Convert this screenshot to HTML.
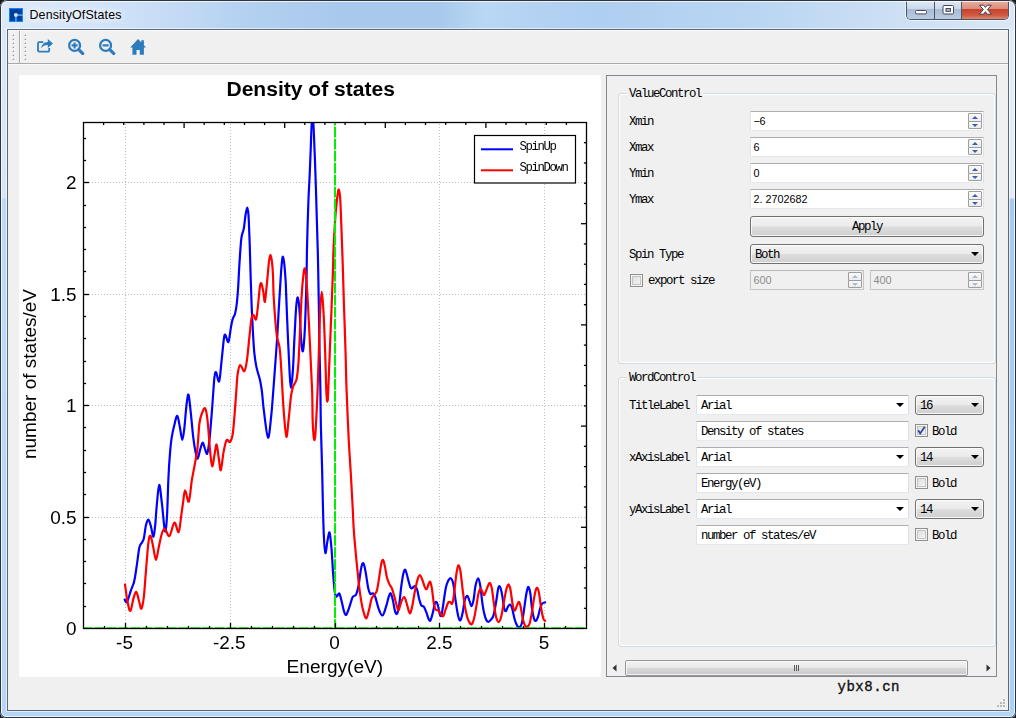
<!DOCTYPE html>
<html><head><meta charset="utf-8"><title>DensityOfStates</title>
<style>
html,body{margin:0;padding:0}
body{width:1016px;height:718px;overflow:hidden;background:#1a1a1a;position:relative;font-family:"Liberation Mono",monospace;font-size:12px;color:#000}
*{box-sizing:border-box}
.abs{position:absolute}
#frame{position:absolute;left:0;top:0;width:1016px;height:718px;border-radius:7px 7px 6px 6px;
 background:linear-gradient(90deg,#dce9f8 0,#d7e7f9 60px,#c9def6 150px,#b3d0f0 250px,#a9c9ec 340px,#a9c9ec 440px,#b9d8f5 485px,#b4d3f3 530px,#afcff1 600px,#b9d5f2 750px,#cde0f4 900px,#d9e7f6 1016px);overflow:hidden}
#frame:before{content:"";position:absolute;left:1px;top:1px;right:1px;bottom:1px;border:1px solid rgba(255,255,255,.75);border-radius:6px 6px 5px 5px;z-index:20;pointer-events:none}
#frame:after{content:"";position:absolute;left:0;top:0;right:0;bottom:0;border:1px solid #2c3440;border-radius:7px 7px 6px 6px;z-index:21;pointer-events:none}
#sideL,#sideR,#sideB{position:absolute;background:#b9d4f1}
#sideL{left:1px;top:30px;width:6px;bottom:1px;background:linear-gradient(#d9e7f7 0,#d6e5f6 168px,#bcdbf9 169px,#b6d5f5 100%)}
#sideR{right:1px;top:30px;width:6px;bottom:1px;background:linear-gradient(#e2ecf8 0,#e2ecf8 168px,#a9cbee 169px,#add0f2 100%)}
#sideB{left:1px;right:1px;bottom:1px;height:6px;background:#b5d5f7}
#client{position:absolute;left:7px;top:29px;width:1002px;height:682px;border:1px solid #5b6678;background:#f0f0f0;box-shadow:0 0 0 1px rgba(255,255,255,.6)}
#title{position:absolute;left:29.5px;top:7px;font-family:"Liberation Sans",sans-serif;font-size:12.4px;letter-spacing:.17px;line-height:16px;color:#000;text-shadow:0 0 6px #fff,0 0 10px #fff,0 0 14px #fff;white-space:nowrap}
#appicon{position:absolute;left:9px;top:8px;width:14px;height:14px}
#btns{position:absolute;left:906px;top:0;width:103px;height:20px;border:1px solid #4a5566;border-top:none;border-radius:0 0 5px 5px;overflow:hidden;box-shadow:0 0 0 1px rgba(255,255,255,.55)}
#btns div{position:absolute;top:0;height:19px}
#bmin{left:0;width:28px;background:linear-gradient(#e3ecf6 0,#cbd9ea 45%,#a9bdd6 50%,#b9cbe2 100%);border-right:1px solid #4a5566}
#bmax{left:28px;width:27px;background:linear-gradient(#e3ecf6 0,#cbd9ea 45%,#a9bdd6 50%,#b9cbe2 100%);border-right:1px solid #4a5566}
#bclose{left:55px;width:47px;background:linear-gradient(#eab4a6 0,#dc8e7d 45%,#c8432c 50%,#d0583f 80%,#dd8a6e 100%)}
#toolbar{position:absolute;left:8px;top:30px;width:1000px;height:34px;background:#f0f0f0;border-bottom:1px solid #a9a9a9;border-top:1px solid #fcfcfc;box-shadow:0 1px 0 #f8f8f8}
.handle{position:absolute;top:4px;width:3px;height:26px;background:repeating-linear-gradient(#b4b4b4 0,#b4b4b4 1.5px,#f8f8f8 1.5px,#f8f8f8 3px,#f0f0f0 3px,#f0f0f0 4px)}
#tsep{position:absolute;left:11px;top:1px;width:1px;height:32px;background:#b0b0b0}
.ticon{position:absolute;top:8px;width:18px;height:18px}
.chart{position:absolute;left:19px;top:75px;will-change:transform}
.grid{stroke:#bebebe;stroke-width:1;stroke-dasharray:1 2;shape-rendering:crispEdges}
#scroll{position:absolute;left:606px;top:75px;width:391px;height:602px;border:1px solid #828790;background:#f0f0f0}
.gb{position:absolute;border:1px solid #d0dbe3;border-radius:3px;box-shadow:inset 0 0 0 1px #fdfdfd}
.gbt{position:absolute;background:#f0f0f0;padding:0 2px;line-height:12px;white-space:nowrap}
.t{position:absolute;white-space:nowrap;line-height:14px;letter-spacing:-1.44px;font-size:12.4px}
.spin,.le,.ecombo{position:absolute;height:20px;border:1px solid;border-color:#abadb3 #dbdfe6 #e3e9ef #e2e3ea;background:#fff;border-radius:1px}
.spin.dis{background:#f0f0f0;border-color:#b8b8b8 #c4c4c4 #c4c4c4 #c4c4c4}
.spin.dis .v{color:#8a8a8a}
.v{position:absolute;left:2.5px;top:2px;line-height:14px;font-family:"Liberation Sans",sans-serif;font-size:10.8px;white-space:nowrap}
.v b{display:inline-block;width:6px;text-align:center;font-weight:normal}
.sb{position:absolute;right:1px;top:1px;width:14px;height:16px}
.sb i{position:absolute;left:0;width:14px;height:8.5px;border:1px solid #9d9d9d;background:linear-gradient(#fafafa,#ececec);border-radius:1px}
.sb i:first-child{top:0}.sb i:last-child{top:7.5px}
.sb i:before{content:"";position:absolute;left:3px;top:1.5px;border:3px solid transparent}
.sb i:first-child:before{border-bottom:3.2px solid #3d5fa8;border-top:none}
.sb i:last-child:before{border-top:3.2px solid #3d5fa8;border-bottom:none;top:2px}
.dis .sb i:before{opacity:.4}
.btn{position:absolute;border:1px solid #707070;border-radius:3px;background:linear-gradient(#f2f2f2 0,#ebebeb 48%,#dddddd 52%,#cfcfcf 100%);box-shadow:inset 0 0 0 1px rgba(255,255,255,.8);text-align:center}
.combo{position:absolute;height:20px;border:1px solid #707070;border-radius:3px;background:linear-gradient(#f2f2f2 0,#ebebeb 48%,#dddddd 52%,#cfcfcf 100%);box-shadow:inset 0 0 0 1px rgba(255,255,255,.8)}
.arr{position:absolute;right:4.5px;top:7px;border-left:4px solid transparent;border-right:4px solid transparent;border-top:4.5px solid #000}
.cb{position:absolute;width:13px;height:13px;border:1px solid #8e8f8f;background:#f4f4f4;box-shadow:inset 0 0 0 1px #f4f4f4, inset 0 0 0 2px #c4c4c4;background:linear-gradient(135deg,#d9d9d9,#fafafa)}
#hsb{position:absolute;left:607px;top:660px;width:389px;height:16px;background:#f0f0f0}
#thumb{position:absolute;left:18px;top:0px;width:343px;height:15.5px;border:1px solid #979797;border-radius:2px;background:linear-gradient(#f3f3f3 0,#e9e9e9 45%,#d7d7d7 55%,#c9c9c9 100%);box-shadow:inset 0 0 0 1px rgba(255,255,255,.7)}
</style></head><body>
<div id="frame">
 <div id="sideL"></div><div id="sideR"></div><div id="sideB"></div>
 <svg id="appicon" viewBox="0 0 14 14"><rect width="14" height="14" fill="#0b8bf2"/><rect x="1" y="1" width="12" height="12" fill="#003f9e"/><rect x="6" y="8.5" width="1.8" height="5.5" fill="#3c9cf8"/><rect x="8.4" y="6.4" width="5.6" height="1.4" fill="#5aaefc"/><circle cx="6.9" cy="7.1" r="2" fill="#cfe6ff"/></svg>
 <div id="title">DensityOfStates</div>
 <div id="btns"><div id="bmin"></div><div id="bmax"></div><div id="bclose"></div>
  <svg class="abs" style="left:0;top:0" width="103" height="20" viewBox="0 0 103 20">
   <rect x="8.5" y="10.5" width="11" height="3.4" rx="1" fill="#fff" stroke="#45475a" stroke-width="1"/>
   <rect x="36" y="5.5" width="10.5" height="8.5" rx="1" fill="#fff" stroke="#45475a" stroke-width="1"/>
   <rect x="39" y="8.5" width="4.5" height="2.8" fill="#a9bdd6" stroke="#45475a" stroke-width="1"/>
   <path d="M72.6 5.2h4l1.8 2.2 1.8-2.2h4l-3.7 4.4 3.9 4.6h-4.1l-1.9-2.5-1.9 2.5h-4.1l3.9-4.6z" fill="#fff" stroke="#3d3f52" stroke-width="1" stroke-linejoin="round"/>
  </svg>
 </div>
 <div id="client"></div>
 <div id="toolbar"></div>
 <svg class="abs" style="left:0;top:0" width="40" height="66" viewBox="0 0 40 66" shape-rendering="crispEdges"><rect x="12" y="34" width="1" height="1" fill="#fff"/><rect x="13" y="34" width="1" height="1" fill="#c9c9c9"/><rect x="12" y="35" width="1" height="1" fill="#c9c9c9"/><rect x="13" y="35" width="1" height="1" fill="#a3a3a3"/><rect x="12" y="38" width="1" height="1" fill="#fff"/><rect x="13" y="38" width="1" height="1" fill="#c9c9c9"/><rect x="12" y="39" width="1" height="1" fill="#c9c9c9"/><rect x="13" y="39" width="1" height="1" fill="#a3a3a3"/><rect x="12" y="42" width="1" height="1" fill="#fff"/><rect x="13" y="42" width="1" height="1" fill="#c9c9c9"/><rect x="12" y="43" width="1" height="1" fill="#c9c9c9"/><rect x="13" y="43" width="1" height="1" fill="#a3a3a3"/><rect x="12" y="46" width="1" height="1" fill="#fff"/><rect x="13" y="46" width="1" height="1" fill="#c9c9c9"/><rect x="12" y="47" width="1" height="1" fill="#c9c9c9"/><rect x="13" y="47" width="1" height="1" fill="#a3a3a3"/><rect x="12" y="50" width="1" height="1" fill="#fff"/><rect x="13" y="50" width="1" height="1" fill="#c9c9c9"/><rect x="12" y="51" width="1" height="1" fill="#c9c9c9"/><rect x="13" y="51" width="1" height="1" fill="#a3a3a3"/><rect x="12" y="54" width="1" height="1" fill="#fff"/><rect x="13" y="54" width="1" height="1" fill="#c9c9c9"/><rect x="12" y="55" width="1" height="1" fill="#c9c9c9"/><rect x="13" y="55" width="1" height="1" fill="#a3a3a3"/><rect x="12" y="58" width="1" height="1" fill="#fff"/><rect x="13" y="58" width="1" height="1" fill="#c9c9c9"/><rect x="12" y="59" width="1" height="1" fill="#c9c9c9"/><rect x="13" y="59" width="1" height="1" fill="#a3a3a3"/><rect x="24" y="34" width="1" height="1" fill="#fff"/><rect x="25" y="34" width="1" height="1" fill="#c9c9c9"/><rect x="24" y="35" width="1" height="1" fill="#c9c9c9"/><rect x="25" y="35" width="1" height="1" fill="#a3a3a3"/><rect x="24" y="38" width="1" height="1" fill="#fff"/><rect x="25" y="38" width="1" height="1" fill="#c9c9c9"/><rect x="24" y="39" width="1" height="1" fill="#c9c9c9"/><rect x="25" y="39" width="1" height="1" fill="#a3a3a3"/><rect x="24" y="42" width="1" height="1" fill="#fff"/><rect x="25" y="42" width="1" height="1" fill="#c9c9c9"/><rect x="24" y="43" width="1" height="1" fill="#c9c9c9"/><rect x="25" y="43" width="1" height="1" fill="#a3a3a3"/><rect x="24" y="46" width="1" height="1" fill="#fff"/><rect x="25" y="46" width="1" height="1" fill="#c9c9c9"/><rect x="24" y="47" width="1" height="1" fill="#c9c9c9"/><rect x="25" y="47" width="1" height="1" fill="#a3a3a3"/><rect x="24" y="50" width="1" height="1" fill="#fff"/><rect x="25" y="50" width="1" height="1" fill="#c9c9c9"/><rect x="24" y="51" width="1" height="1" fill="#c9c9c9"/><rect x="25" y="51" width="1" height="1" fill="#a3a3a3"/><rect x="24" y="54" width="1" height="1" fill="#fff"/><rect x="25" y="54" width="1" height="1" fill="#c9c9c9"/><rect x="24" y="55" width="1" height="1" fill="#c9c9c9"/><rect x="25" y="55" width="1" height="1" fill="#a3a3a3"/><rect x="24" y="58" width="1" height="1" fill="#fff"/><rect x="25" y="58" width="1" height="1" fill="#c9c9c9"/><rect x="24" y="59" width="1" height="1" fill="#c9c9c9"/><rect x="25" y="59" width="1" height="1" fill="#a3a3a3"/><rect x="19" y="31" width="1" height="32" fill="#a6a6a6"/><rect x="20" y="31" width="1" height="32" fill="#fdfdfd"/></svg>
 <svg class="ticon" style="left:36px;top:37px" viewBox="0 0 18 18"><g fill="none" stroke="#2c7cbd" stroke-width="1.8" stroke-linejoin="round"><path d="M7.4 5.2H3.2a1.2 1.2 0 0 0-1.2 1.2v7a1.2 1.2 0 0 0 1.2 1.2h8.8a1.2 1.2 0 0 0 1.2-1.2V11"/></g><path d="M5.2 11.6c.3-4.3 3-6.5 6.6-6.7V2.1L17 6.6 11.8 11V8.1c-2.7-.1-4.8.7-6.6 3.5z" fill="#2c7cbd"/></svg>
 <svg class="ticon" style="left:67px;top:37px" viewBox="0 0 18 18"><circle cx="7.6" cy="8.4" r="5.45" fill="none" stroke="#2c7cbd" stroke-width="2.25"/><path d="M11.8 12.6l4 4" stroke="#2c7cbd" stroke-width="3" stroke-linecap="round"/><path d="M4.6 8.4h6M7.6 5.4v6" stroke="#2c7cbd" stroke-width="2.1"/></svg>
 <svg class="ticon" style="left:98px;top:37px" viewBox="0 0 18 18"><circle cx="7.6" cy="8.4" r="5.45" fill="none" stroke="#2c7cbd" stroke-width="2.25"/><path d="M11.8 12.6l4 4" stroke="#2c7cbd" stroke-width="3" stroke-linecap="round"/><path d="M4.6 8.4h6" stroke="#2c7cbd" stroke-width="2.1"/></svg>
 <svg class="ticon" style="left:129px;top:37px" viewBox="0 0 18 18"><path d="M9.1 2L1.2 10.4h2.2v7.4h4.1v-4.9h3.3v4.9h4.1v-7.4h2.1L14.9 8.2V3.3h-2.6v2.1z" fill="#2c7cbd"/></svg>

<svg class="chart" width="582" height="602" viewBox="19 75 582 602">
<rect x="19" y="75" width="582" height="602" fill="#fff"/>
<line x1="125.5" y1="629.0" x2="125.5" y2="122.0" class="grid"/>
<line x1="230.5" y1="629.0" x2="230.5" y2="122.0" class="grid"/>
<line x1="335.5" y1="629.0" x2="335.5" y2="122.0" class="grid"/>
<line x1="439.5" y1="629.0" x2="439.5" y2="122.0" class="grid"/>
<line x1="544.5" y1="629.0" x2="544.5" y2="122.0" class="grid"/>
<line x1="83.0" y1="517.5" x2="587.0" y2="517.5" class="grid"/>
<line x1="83.0" y1="405.5" x2="587.0" y2="405.5" class="grid"/>
<line x1="83.0" y1="294.5" x2="587.0" y2="294.5" class="grid"/>
<line x1="83.0" y1="182.5" x2="587.0" y2="182.5" class="grid"/>
<defs><clipPath id="cp"><rect x="83.5" y="122.5" width="503.0" height="507.0"/></clipPath></defs>
<g clip-path="url(#cp)" fill="none" stroke-linejoin="round" stroke-linecap="round">
<path d="M124.7 599.6C125.1 600.0 126.0 603.5 127.0 602.0C128.0 600.5 129.7 593.9 130.9 590.4C132.1 586.9 133.2 585.4 134.2 581.2C135.2 577.0 136.0 570.9 136.8 565.3C137.7 559.7 138.5 551.5 139.3 547.7C140.1 543.9 141.1 544.2 141.8 542.7C142.6 541.2 143.1 541.4 143.8 538.5C144.5 535.6 145.2 528.2 146.0 525.1C146.8 522.0 147.7 519.4 148.5 519.7C149.3 520.0 150.2 523.9 151.0 526.8C151.8 529.6 152.8 537.1 153.5 536.8C154.2 536.5 154.6 530.4 155.2 525.1C155.8 519.8 156.1 511.7 156.8 505.0C157.5 498.3 158.3 485.2 159.2 484.9C160.0 484.6 160.9 495.6 161.9 503.3C162.9 511.0 164.1 528.5 164.9 531.0C165.7 533.5 166.3 526.7 166.9 518.0C167.5 509.3 167.9 489.7 168.4 478.7C168.9 467.7 169.5 458.9 170.1 451.9C170.7 444.9 171.1 441.3 171.8 436.9C172.5 432.4 173.4 428.7 174.3 425.2C175.2 421.7 176.3 415.4 177.3 416.0C178.3 416.6 179.3 424.5 180.1 428.5C180.9 432.5 181.6 439.9 182.3 439.9C183.0 439.9 183.6 434.3 184.3 428.5C185.0 422.7 185.8 410.7 186.5 405.1C187.2 399.5 187.8 393.6 188.5 394.7C189.2 395.8 189.9 404.8 190.7 411.8C191.5 418.8 192.4 430.2 193.2 436.9C194.0 443.6 194.8 448.3 195.5 451.9C196.2 455.5 196.9 459.0 197.7 458.6C198.5 458.2 199.4 452.0 200.2 449.4C201.0 446.8 201.9 442.8 202.7 442.7C203.5 442.6 204.2 446.8 204.9 448.6C205.7 450.4 206.4 455.0 207.2 453.6C207.9 452.2 208.7 446.6 209.4 440.2C210.1 433.8 210.9 423.6 211.6 415.1C212.3 406.6 213.0 395.6 213.5 389.0C214.0 382.4 214.2 378.2 214.7 375.4C215.1 372.6 215.4 371.4 216.2 372.4C216.9 373.4 218.3 383.6 219.2 381.3C220.1 379.0 221.0 365.8 221.8 358.7C222.6 351.6 223.3 342.6 223.9 338.6C224.5 334.6 224.7 334.3 225.4 334.9C226.2 335.5 227.5 343.3 228.4 342.0C229.3 340.7 230.3 330.7 231.0 326.9C231.7 323.1 231.9 321.6 232.6 319.4C233.3 317.2 234.4 316.1 235.1 313.5C235.8 310.9 236.3 308.0 236.8 303.5C237.3 299.0 237.8 292.9 238.2 286.7C238.6 280.4 238.8 274.0 239.3 266.0C239.8 258.0 240.6 244.8 241.3 238.6C242.1 232.4 243.1 232.5 243.8 228.6C244.5 224.7 244.9 218.7 245.5 215.2C246.1 211.7 246.7 207.7 247.2 207.7C247.7 207.7 248.1 209.2 248.5 215.2C248.9 221.2 249.3 233.7 249.7 243.7C250.0 253.7 250.4 267.8 250.6 275.0C250.8 282.2 250.8 280.6 251.0 286.7C251.2 292.8 251.5 303.4 251.9 311.8C252.3 320.2 252.8 329.9 253.2 336.9C253.6 343.9 253.9 348.9 254.4 353.7C254.9 358.4 255.5 362.1 256.1 365.4C256.7 368.7 257.5 371.1 258.2 373.7C258.9 376.3 259.6 377.9 260.2 381.0C260.8 384.1 261.4 387.1 262.0 392.0C262.6 396.9 262.8 402.5 263.8 410.1C264.8 417.7 266.8 436.9 268.0 437.7C269.2 438.5 270.4 423.4 271.3 415.1C272.2 406.8 272.8 396.6 273.5 388.0C274.2 379.4 274.7 371.6 275.3 363.7C275.9 355.8 276.4 348.9 277.0 340.3C277.6 331.7 278.1 321.2 278.6 311.8C279.2 302.4 279.8 291.9 280.3 284.0C280.8 276.1 281.2 269.1 281.7 264.5C282.1 259.9 282.5 256.4 283.0 256.7C283.5 256.9 284.1 261.8 284.5 266.0C284.9 270.2 285.4 277.1 285.7 282.0C286.0 286.9 285.8 286.0 286.2 295.1C286.6 304.2 287.3 324.3 287.9 336.9C288.4 349.4 289.0 361.9 289.5 370.4C290.0 378.9 290.3 388.0 290.9 388.0C291.5 388.0 292.3 378.9 292.9 370.4C293.5 361.9 293.9 347.5 294.5 336.9C295.1 326.3 295.6 313.4 296.2 306.8C296.8 300.2 297.3 296.8 297.9 297.6C298.5 298.4 299.1 304.7 299.6 311.8C300.2 318.9 300.6 333.7 301.2 340.3C301.8 346.9 302.3 352.3 302.9 351.2C303.5 350.1 304.1 341.6 304.6 333.6C305.1 325.7 305.5 313.3 305.8 303.5C306.1 293.7 306.4 285.0 306.6 275.0C306.8 265.0 306.8 255.9 307.1 243.7C307.4 231.5 308.0 213.0 308.4 201.8C308.8 190.6 309.2 185.0 309.6 176.7C310.0 168.4 310.1 163.1 310.6 152.0C311.1 140.9 311.8 110.0 312.5 110.0C313.2 110.0 314.1 139.5 314.6 152.0C315.2 164.5 315.4 174.0 315.8 185.1C316.2 196.2 316.4 206.1 316.8 218.6C317.2 231.1 317.7 246.2 318.0 260.4C318.3 274.5 318.5 287.9 318.8 303.5C319.1 319.1 319.3 339.3 319.6 353.7C319.9 368.1 320.2 377.8 320.4 390.0C320.6 402.2 320.6 413.7 320.9 426.8C321.2 439.9 321.8 455.7 322.1 468.7C322.4 481.7 322.6 493.6 322.9 505.0C323.2 516.4 323.5 528.8 323.9 536.8C324.3 544.8 324.8 552.7 325.4 553.2C326.0 553.8 326.9 543.5 327.6 540.1C328.3 536.7 329.0 531.2 329.6 532.6C330.2 534.0 330.9 541.7 331.5 548.5C332.1 555.3 332.6 566.4 333.1 573.6C333.7 580.9 334.2 588.1 334.8 592.0C335.4 595.9 335.8 596.4 336.5 596.7C337.2 597.0 338.4 592.7 339.3 593.6C340.2 594.5 341.0 598.9 341.8 602.0C342.6 605.1 343.5 610.0 344.3 612.1C345.1 614.2 345.5 615.5 346.4 614.6C347.2 613.8 348.3 609.9 349.4 607.0C350.4 604.1 351.6 599.1 352.7 597.0C353.8 594.9 355.1 596.5 356.1 594.5C357.1 592.5 357.8 589.6 358.6 585.3C359.4 581.0 360.3 572.2 361.1 568.5C361.9 564.8 362.6 562.6 363.3 563.2C364.1 563.8 364.8 567.7 365.6 571.9C366.4 576.1 367.5 584.9 368.3 588.6C369.1 592.3 369.6 593.2 370.3 594.0C371.1 594.8 372.0 592.8 372.8 593.3C373.6 593.8 374.3 594.4 375.3 597.0C376.3 599.6 377.4 605.6 378.6 608.7C379.8 611.8 381.2 615.8 382.5 615.4C383.8 615.0 385.2 609.3 386.2 606.2C387.2 603.1 387.9 599.1 388.7 597.0C389.4 594.9 390.0 592.8 390.7 593.3C391.4 593.8 392.2 597.3 392.9 600.3C393.6 603.3 394.3 609.0 395.0 611.2C395.7 613.4 396.4 614.7 397.1 613.7C397.8 612.7 398.4 609.9 399.1 605.4C399.8 600.9 400.5 592.3 401.2 587.0C401.9 581.7 402.7 576.5 403.4 573.6C404.1 570.8 404.6 569.1 405.4 569.9C406.1 570.7 407.1 575.7 407.9 578.6C408.7 581.5 409.7 585.7 410.4 587.3C411.1 588.9 411.4 588.5 412.1 588.3C412.8 588.1 413.8 586.0 414.6 586.1C415.4 586.2 416.1 586.5 416.8 588.6C417.6 590.7 418.4 595.9 419.1 598.7C419.9 601.5 420.5 604.1 421.3 605.4C422.1 606.7 423.0 605.6 423.8 606.7C424.6 607.8 425.5 610.1 426.3 612.1C427.1 614.1 427.8 617.3 428.5 618.7C429.2 620.1 429.8 621.5 430.5 620.4C431.2 619.3 432.3 614.9 433.0 612.1C433.7 609.3 434.1 605.4 434.7 603.7C435.3 602.0 435.8 601.6 436.4 602.0C437.0 602.4 437.6 604.2 438.1 606.2C438.7 608.2 439.1 612.2 439.7 613.7C440.2 615.2 440.8 617.1 441.4 615.4C442.0 613.7 442.7 608.1 443.4 603.5C444.1 598.9 445.0 591.8 445.8 588.0C446.6 584.2 447.5 582.2 448.3 580.6C449.1 579.0 450.0 577.8 450.9 578.4C451.8 579.0 452.6 580.6 453.4 584.5C454.2 588.4 455.0 596.7 455.8 602.0C456.6 607.3 457.5 613.5 458.3 616.5C459.1 619.5 459.7 620.9 460.4 620.3C461.1 619.7 461.9 616.3 462.6 613.0C463.3 609.7 464.0 603.1 464.8 600.3C465.6 597.4 466.6 595.9 467.3 595.9C468.1 595.9 468.6 598.6 469.3 600.3C470.0 602.0 470.8 606.2 471.5 606.2C472.2 606.2 472.8 603.8 473.5 600.3C474.2 596.8 474.8 589.0 475.6 585.3C476.4 581.6 477.4 578.3 478.2 578.3C479.0 578.3 479.4 580.8 480.2 585.3C480.9 589.8 481.9 600.1 482.7 605.4C483.5 610.7 484.3 614.4 485.2 617.1C486.1 619.8 487.0 621.4 488.0 621.8C489.0 622.2 490.1 620.7 491.0 619.6C491.9 618.5 492.6 618.3 493.5 615.4C494.4 612.5 495.3 606.5 496.1 602.0C496.9 597.5 497.6 591.2 498.2 588.6C498.8 586.0 499.3 585.8 499.9 586.6C500.5 587.4 501.2 590.1 501.9 593.6C502.6 597.1 503.5 605.0 504.1 607.9C504.8 610.8 505.2 611.4 505.8 611.2C506.4 611.1 507.1 608.1 507.8 607.0C508.5 605.9 509.2 604.4 509.9 604.5C510.6 604.6 511.2 605.5 512.0 607.9C512.8 610.3 513.7 615.8 514.5 618.7C515.3 621.6 516.2 624.0 517.0 625.4C517.8 626.8 518.4 627.7 519.2 627.4C520.0 627.1 521.0 626.3 521.7 623.8C522.5 621.2 523.0 616.6 523.7 612.1C524.4 607.6 525.2 600.9 525.8 597.0C526.4 593.1 527.0 590.2 527.5 588.6C528.0 587.0 528.2 586.5 528.7 587.3C529.2 588.1 529.9 590.0 530.4 593.6C530.9 597.2 531.4 604.5 532.0 608.7C532.6 612.9 533.4 616.7 534.0 618.7C534.6 620.7 535.1 621.2 535.7 620.9C536.4 620.6 537.2 619.1 537.9 617.1C538.6 615.1 539.4 610.9 540.1 608.7C540.8 606.5 541.3 604.8 542.1 603.7C542.9 602.7 544.6 602.6 545.1 602.4" stroke="#0000ff" stroke-width="2.2"/>
<path d="M125.0 584.5C125.4 587.4 126.7 597.7 127.6 602.1C128.5 606.5 129.4 611.5 130.4 610.9C131.4 610.3 132.4 601.9 133.4 598.7C134.4 595.6 135.3 591.4 136.3 592.0C137.3 592.6 138.5 599.3 139.3 602.1C140.2 604.9 140.7 609.6 141.4 608.8C142.2 608.0 143.0 603.5 143.8 597.1C144.6 590.7 145.2 579.5 146.0 570.3C146.8 561.1 147.7 547.5 148.5 541.8C149.3 536.1 149.8 535.1 150.6 536.0C151.4 536.9 152.3 542.9 153.2 546.9C154.1 550.9 155.1 559.9 156.0 559.9C156.9 559.9 157.8 551.3 158.8 546.9C159.8 542.5 160.9 536.5 161.9 533.5C162.9 530.5 163.7 528.4 164.9 528.8C166.2 529.2 167.8 537.0 169.4 536.0C171.0 535.0 172.9 523.2 174.4 522.6C175.9 522.0 177.5 533.1 178.6 532.1C179.7 531.1 180.4 521.6 181.1 516.7C181.8 511.9 182.3 507.4 183.0 503.0C183.7 498.6 184.1 490.6 185.1 490.4C186.1 490.2 187.7 503.3 188.8 501.6C189.9 499.9 190.9 486.2 191.8 480.4C192.7 474.6 193.4 472.3 194.3 467.0C195.2 461.7 196.6 455.9 197.4 448.6C198.2 441.4 198.7 429.4 199.4 423.5C200.2 417.6 200.9 415.9 201.9 413.4C202.9 410.9 204.2 407.0 205.2 408.4C206.2 409.8 206.9 414.6 207.7 421.8C208.5 429.1 209.4 444.5 210.2 451.9C210.9 459.3 211.5 465.6 212.2 466.2C212.9 466.8 213.7 458.9 214.4 455.3C215.1 451.7 215.9 444.1 216.6 444.4C217.3 444.7 217.9 452.7 218.6 457.0C219.3 461.3 220.0 471.2 220.8 470.3C221.6 469.4 222.6 456.9 223.6 451.9C224.6 446.9 225.5 441.9 226.6 440.2C227.7 438.5 229.0 443.0 230.0 441.9C231.0 440.8 231.9 439.6 232.8 433.5C233.7 427.4 234.7 412.7 235.3 405.1C235.9 397.5 236.1 393.2 236.5 388.0C236.9 382.8 237.1 377.5 237.7 373.7C238.3 369.9 239.1 365.4 240.2 365.0C241.3 364.6 243.2 372.0 244.3 371.2C245.4 370.4 246.1 366.1 246.9 360.4C247.8 354.7 248.6 343.9 249.4 336.9C250.2 329.9 250.8 322.2 251.5 318.5C252.2 314.8 252.7 314.7 253.5 314.8C254.3 314.9 255.3 321.3 256.1 319.4C256.9 317.5 257.6 308.9 258.2 303.5C258.8 298.1 259.4 290.1 259.9 286.7C260.4 283.3 260.8 282.5 261.4 283.4C262.0 284.2 262.7 288.7 263.3 291.8C263.9 294.9 264.3 302.7 264.9 301.8C265.4 300.9 266.1 291.3 266.6 286.7C267.1 282.1 267.4 278.1 267.8 274.0C268.2 269.9 268.5 265.3 268.9 262.1C269.3 258.9 269.9 254.9 270.4 254.9C270.9 254.9 271.6 258.8 272.0 262.1C272.4 265.5 272.7 269.5 273.0 275.0C273.3 280.5 273.2 287.6 273.6 295.1C274.0 302.6 274.7 313.2 275.3 320.2C275.9 327.2 276.3 332.4 277.0 336.9C277.7 341.4 278.9 342.8 279.5 347.0C280.1 351.2 280.3 355.2 280.8 362.0C281.3 368.8 281.8 379.4 282.3 388.0C282.8 396.6 283.2 405.2 283.9 413.4C284.6 421.5 285.6 436.3 286.4 436.9C287.2 437.5 288.1 423.6 288.9 416.8C289.7 410.0 290.3 401.0 291.0 396.0C291.7 391.0 292.4 389.0 293.0 387.0C293.6 385.0 293.9 385.2 294.5 383.8C295.1 382.4 296.1 382.2 296.7 378.8C297.3 375.4 297.8 372.1 298.4 363.7C299.0 355.3 299.6 340.0 300.1 328.6C300.7 317.2 301.1 304.0 301.7 295.1C302.2 286.2 302.9 279.4 303.4 275.0C303.9 270.6 304.4 267.8 304.9 268.4C305.4 269.0 305.8 272.5 306.3 278.4C306.8 284.2 307.2 290.9 307.9 303.5C308.6 316.1 309.7 339.3 310.4 353.7C311.1 368.1 311.7 379.2 312.1 390.0C312.5 400.8 312.4 410.9 312.6 418.5C312.8 426.1 313.2 431.7 313.5 435.3C313.8 438.9 314.1 440.2 314.4 440.2C314.7 440.2 315.0 438.9 315.3 435.3C315.6 431.7 315.9 426.1 316.3 418.5C316.7 410.9 317.2 400.8 317.6 390.0C318.0 379.2 318.4 366.7 318.8 353.7C319.2 340.7 319.6 322.1 320.1 311.8C320.6 301.5 321.2 291.8 321.8 291.8C322.4 291.8 322.9 301.5 323.5 311.8C324.1 322.1 324.8 341.0 325.2 353.7C325.6 366.4 325.9 380.6 326.2 388.0C326.5 395.4 326.6 396.1 326.8 398.4C326.9 400.7 327.1 401.7 327.3 401.7C327.5 401.7 327.7 400.7 327.9 398.4C328.0 396.1 328.0 395.4 328.3 388.0C328.6 380.6 329.2 366.4 329.7 353.7C330.2 341.0 330.8 325.8 331.4 311.8C331.9 297.9 332.7 280.0 333.0 270.0C333.3 260.0 333.1 259.2 333.4 252.0C333.7 244.8 334.2 234.7 334.7 226.9C335.2 219.1 335.8 211.0 336.4 205.2C336.9 199.3 337.6 194.3 338.0 191.8C338.4 189.3 338.5 189.0 338.9 190.1C339.3 191.2 339.8 192.4 340.2 198.5C340.6 204.6 341.0 216.6 341.4 226.9C341.8 237.2 342.2 247.6 342.6 260.4C343.0 273.2 343.4 287.9 343.9 303.5C344.4 319.1 345.2 339.6 345.6 353.7C346.0 367.8 346.0 374.4 346.5 388.0C347.0 401.6 347.8 420.4 348.5 435.2C349.2 450.0 350.3 464.9 351.0 477.0C351.7 489.1 352.2 498.9 352.7 508.0C353.2 517.1 353.3 523.6 353.9 531.7C354.5 539.8 355.3 548.4 356.1 556.8C356.9 565.2 357.8 574.6 358.6 581.9C359.4 589.1 360.3 595.3 361.1 600.3C361.9 605.3 362.7 609.1 363.6 612.1C364.5 615.1 365.5 618.7 366.4 618.4C367.3 618.1 368.0 613.7 368.9 610.4C369.8 607.1 370.7 601.4 371.6 598.7C372.5 596.1 373.6 595.9 374.5 594.5C375.4 593.1 376.2 593.5 377.0 590.3C377.8 587.1 378.8 579.8 379.5 575.2C380.2 570.6 380.9 565.2 381.5 562.7C382.1 560.2 382.6 559.5 383.2 560.2C383.8 560.9 384.4 564.0 385.0 566.9C385.6 569.8 386.2 574.9 387.0 577.8C387.8 580.7 388.7 582.6 389.5 584.4C390.3 586.2 391.2 586.5 392.0 588.6C392.8 590.7 393.6 593.9 394.5 597.0C395.4 600.1 396.4 604.8 397.1 607.0C397.8 609.2 398.0 610.8 398.7 610.0C399.4 609.2 400.3 604.2 401.2 602.0C402.1 599.8 403.2 597.0 404.1 597.0C405.0 597.0 405.5 599.6 406.3 602.0C407.1 604.4 408.1 609.4 408.8 611.2C409.5 613.0 409.8 613.9 410.4 612.9C411.0 611.9 411.6 609.2 412.4 605.4C413.2 601.6 414.2 594.6 415.1 590.3C416.0 586.0 416.8 581.9 417.6 579.4C418.4 576.9 419.3 575.1 420.1 575.2C420.9 575.4 421.7 578.3 422.5 580.3C423.3 582.2 424.0 585.4 424.7 586.9C425.4 588.4 426.0 589.5 426.7 589.0C427.4 588.5 428.2 584.8 428.8 583.6C429.4 582.4 429.7 581.1 430.2 581.9C430.7 582.7 431.3 585.0 431.9 588.6C432.5 592.2 433.3 600.2 433.9 603.7C434.5 607.2 434.8 608.4 435.5 609.5C436.2 610.6 437.2 609.7 438.1 610.4C439.0 611.1 439.8 612.7 440.6 613.7C441.4 614.7 442.3 616.9 443.1 616.2C443.9 615.5 444.8 611.8 445.6 609.5C446.5 607.2 447.4 603.9 448.2 602.6C449.0 601.4 449.6 601.8 450.3 602.0C451.0 602.2 451.5 604.7 452.1 603.7C452.7 602.7 453.2 600.4 453.8 596.0C454.4 591.6 455.3 582.3 455.9 577.5C456.5 572.7 457.1 569.4 457.6 567.4C458.1 565.4 458.4 565.0 458.9 565.7C459.4 566.4 459.9 567.6 460.5 571.5C461.1 575.4 461.9 583.4 462.6 589.3C463.4 595.2 464.2 602.2 465.0 607.0C465.8 611.8 466.7 615.3 467.5 618.0C468.3 620.7 469.1 622.0 469.8 623.0C470.5 624.0 471.1 624.8 471.8 624.1C472.5 623.4 473.2 621.8 474.0 618.7C474.8 615.6 475.8 609.6 476.5 605.4C477.2 601.2 477.8 596.4 478.5 593.6C479.2 590.8 479.8 588.7 480.5 588.6C481.2 588.5 482.1 591.7 482.7 592.8C483.3 593.9 483.6 595.7 484.3 595.0C485.0 594.3 486.1 590.5 486.9 588.6C487.7 586.8 488.3 584.8 488.9 583.9C489.4 583.0 489.7 582.5 490.2 583.3C490.7 584.1 491.3 585.2 491.9 588.6C492.5 592.0 493.2 599.0 493.9 603.7C494.6 608.5 495.3 614.0 496.1 617.1C496.9 620.2 497.8 622.1 498.6 622.1C499.4 622.1 500.3 620.2 501.1 617.1C501.9 614.0 502.8 608.2 503.6 603.7C504.4 599.2 505.4 593.4 506.1 590.3C506.8 587.2 507.3 586.2 507.8 585.3C508.3 584.4 508.4 584.1 508.9 584.9C509.4 585.7 510.0 586.9 510.6 590.3C511.2 593.7 512.1 602.0 512.8 605.4C513.5 608.8 514.1 610.7 514.8 610.7C515.5 610.7 516.3 606.9 517.0 605.4C517.7 603.9 518.4 601.7 519.0 602.0C519.6 602.3 520.1 604.2 520.7 607.0C521.3 609.8 522.1 615.6 522.8 618.7C523.5 621.8 524.3 624.0 525.0 625.4C525.7 626.8 526.2 627.1 527.0 626.8C527.8 626.5 528.7 626.0 529.5 623.8C530.3 621.6 531.0 617.6 531.7 613.7C532.4 609.8 533.0 604.2 533.7 600.3C534.4 596.4 535.1 592.3 535.7 590.3C536.3 588.2 536.8 587.5 537.4 588.0C538.0 588.5 538.5 590.1 539.1 593.6C539.7 597.1 540.5 604.5 541.2 608.7C541.9 612.9 542.8 616.7 543.4 618.7C544.0 620.7 544.8 620.4 545.1 620.8" stroke="#ff0000" stroke-width="2.2"/>
<line x1="335" y1="122.5" x2="335" y2="628.5" stroke="#00f000" stroke-width="2" stroke-dasharray="10.7 1.313" stroke-dashoffset="7.8" stroke-linecap="butt"/>
<line x1="83.5" y1="628" x2="586.5" y2="628" stroke="#00f000" stroke-width="1.7" stroke-dasharray="10.5 1.513" stroke-dashoffset="1.4" stroke-linecap="butt"/>
</g>
<g stroke="#000" stroke-width="1.3" fill="none" stroke-linecap="butt">
<rect x="83.5" y="122.5" width="503.0" height="506.0"/>
<line x1="104.5" y1="628.5" x2="104.5" y2="625.9"/>
<line x1="125.5" y1="628.5" x2="125.5" y2="623.0"/>
<line x1="146.5" y1="628.5" x2="146.5" y2="625.9"/>
<line x1="167.5" y1="628.5" x2="167.5" y2="625.9"/>
<line x1="188.5" y1="628.5" x2="188.5" y2="625.9"/>
<line x1="209.5" y1="628.5" x2="209.5" y2="625.9"/>
<line x1="230.5" y1="628.5" x2="230.5" y2="623.0"/>
<line x1="251.5" y1="628.5" x2="251.5" y2="625.9"/>
<line x1="272.5" y1="628.5" x2="272.5" y2="625.9"/>
<line x1="293.5" y1="628.5" x2="293.5" y2="625.9"/>
<line x1="314.5" y1="628.5" x2="314.5" y2="625.9"/>
<line x1="335.5" y1="628.5" x2="335.5" y2="623.0"/>
<line x1="355.5" y1="628.5" x2="355.5" y2="625.9"/>
<line x1="376.5" y1="628.5" x2="376.5" y2="625.9"/>
<line x1="397.5" y1="628.5" x2="397.5" y2="625.9"/>
<line x1="418.5" y1="628.5" x2="418.5" y2="625.9"/>
<line x1="439.5" y1="628.5" x2="439.5" y2="623.0"/>
<line x1="460.5" y1="628.5" x2="460.5" y2="625.9"/>
<line x1="481.5" y1="628.5" x2="481.5" y2="625.9"/>
<line x1="502.5" y1="628.5" x2="502.5" y2="625.9"/>
<line x1="523.5" y1="628.5" x2="523.5" y2="625.9"/>
<line x1="544.5" y1="628.5" x2="544.5" y2="623.0"/>
<line x1="565.5" y1="628.5" x2="565.5" y2="625.9"/>
<line x1="83.5" y1="606.5" x2="86.1" y2="606.5"/>
<line x1="83.5" y1="583.5" x2="86.1" y2="583.5"/>
<line x1="83.5" y1="561.5" x2="86.1" y2="561.5"/>
<line x1="83.5" y1="539.5" x2="86.1" y2="539.5"/>
<line x1="83.5" y1="517.5" x2="89.0" y2="517.5"/>
<line x1="83.5" y1="494.5" x2="86.1" y2="494.5"/>
<line x1="83.5" y1="472.5" x2="86.1" y2="472.5"/>
<line x1="83.5" y1="450.5" x2="86.1" y2="450.5"/>
<line x1="83.5" y1="427.5" x2="86.1" y2="427.5"/>
<line x1="83.5" y1="405.5" x2="89.0" y2="405.5"/>
<line x1="83.5" y1="383.5" x2="86.1" y2="383.5"/>
<line x1="83.5" y1="361.5" x2="86.1" y2="361.5"/>
<line x1="83.5" y1="338.5" x2="86.1" y2="338.5"/>
<line x1="83.5" y1="316.5" x2="86.1" y2="316.5"/>
<line x1="83.5" y1="294.5" x2="89.0" y2="294.5"/>
<line x1="83.5" y1="271.5" x2="86.1" y2="271.5"/>
<line x1="83.5" y1="249.5" x2="86.1" y2="249.5"/>
<line x1="83.5" y1="227.5" x2="86.1" y2="227.5"/>
<line x1="83.5" y1="205.5" x2="86.1" y2="205.5"/>
<line x1="83.5" y1="182.5" x2="89.0" y2="182.5"/>
<line x1="83.5" y1="160.5" x2="86.1" y2="160.5"/>
<line x1="83.5" y1="138.5" x2="86.1" y2="138.5"/>
<line x1="103.6" y1="122.5" x2="103.6" y2="125.1"/>
<line x1="123.7" y1="122.5" x2="123.7" y2="125.1"/>
<line x1="143.9" y1="122.5" x2="143.9" y2="125.1"/>
<line x1="164.0" y1="122.5" x2="164.0" y2="125.1"/>
<line x1="184.1" y1="122.5" x2="184.1" y2="128.0"/>
<line x1="204.2" y1="122.5" x2="204.2" y2="125.1"/>
<line x1="224.3" y1="122.5" x2="224.3" y2="125.1"/>
<line x1="244.5" y1="122.5" x2="244.5" y2="125.1"/>
<line x1="264.6" y1="122.5" x2="264.6" y2="125.1"/>
<line x1="284.7" y1="122.5" x2="284.7" y2="128.0"/>
<line x1="304.8" y1="122.5" x2="304.8" y2="125.1"/>
<line x1="324.9" y1="122.5" x2="324.9" y2="125.1"/>
<line x1="345.1" y1="122.5" x2="345.1" y2="125.1"/>
<line x1="365.2" y1="122.5" x2="365.2" y2="125.1"/>
<line x1="385.3" y1="122.5" x2="385.3" y2="128.0"/>
<line x1="405.4" y1="122.5" x2="405.4" y2="125.1"/>
<line x1="425.5" y1="122.5" x2="425.5" y2="125.1"/>
<line x1="445.7" y1="122.5" x2="445.7" y2="125.1"/>
<line x1="465.8" y1="122.5" x2="465.8" y2="125.1"/>
<line x1="485.9" y1="122.5" x2="485.9" y2="128.0"/>
<line x1="506.0" y1="122.5" x2="506.0" y2="125.1"/>
<line x1="526.1" y1="122.5" x2="526.1" y2="125.1"/>
<line x1="546.3" y1="122.5" x2="546.3" y2="125.1"/>
<line x1="566.4" y1="122.5" x2="566.4" y2="125.1"/>
<line x1="586.5" y1="608.3" x2="583.9" y2="608.3"/>
<line x1="586.5" y1="588.0" x2="583.9" y2="588.0"/>
<line x1="586.5" y1="567.8" x2="583.9" y2="567.8"/>
<line x1="586.5" y1="547.5" x2="583.9" y2="547.5"/>
<line x1="586.5" y1="527.3" x2="581.0" y2="527.3"/>
<line x1="586.5" y1="507.1" x2="583.9" y2="507.1"/>
<line x1="586.5" y1="486.8" x2="583.9" y2="486.8"/>
<line x1="586.5" y1="466.6" x2="583.9" y2="466.6"/>
<line x1="586.5" y1="446.3" x2="583.9" y2="446.3"/>
<line x1="586.5" y1="426.1" x2="581.0" y2="426.1"/>
<line x1="586.5" y1="405.9" x2="583.9" y2="405.9"/>
<line x1="586.5" y1="385.6" x2="583.9" y2="385.6"/>
<line x1="586.5" y1="365.4" x2="583.9" y2="365.4"/>
<line x1="586.5" y1="345.1" x2="583.9" y2="345.1"/>
<line x1="586.5" y1="324.9" x2="581.0" y2="324.9"/>
<line x1="586.5" y1="304.7" x2="583.9" y2="304.7"/>
<line x1="586.5" y1="284.4" x2="583.9" y2="284.4"/>
<line x1="586.5" y1="264.2" x2="583.9" y2="264.2"/>
<line x1="586.5" y1="243.9" x2="583.9" y2="243.9"/>
<line x1="586.5" y1="223.7" x2="581.0" y2="223.7"/>
<line x1="586.5" y1="203.5" x2="583.9" y2="203.5"/>
<line x1="586.5" y1="183.2" x2="583.9" y2="183.2"/>
<line x1="586.5" y1="163.0" x2="583.9" y2="163.0"/>
<line x1="586.5" y1="142.7" x2="583.9" y2="142.7"/>
</g>
<g font-family="Liberation Sans, sans-serif" font-size="18.95" fill="#000">
<text x="124.5" y="648.8" text-anchor="middle">-5</text>
<text x="229.3" y="648.8" text-anchor="middle">-2.5</text>
<text x="334.5" y="648.8" text-anchor="middle">0</text>
<text x="439.3" y="648.8" text-anchor="middle">2.5</text>
<text x="544.1" y="648.8" text-anchor="middle">5</text>
<text x="76.5" y="635.2" text-anchor="end">0</text>
<text x="76.5" y="523.8" text-anchor="end">0.5</text>
<text x="76.5" y="412.3" text-anchor="end">1</text>
<text x="76.5" y="300.9" text-anchor="end">1.5</text>
<text x="76.5" y="189.4" text-anchor="end">2</text>
<text x="334.9" y="673.3" text-anchor="middle" font-size="19.1">Energy(eV)</text>
<text transform="translate(35.6,374.0) rotate(-90)" text-anchor="middle" font-size="19">number of states/eV</text>
<text x="310.7" y="96" text-anchor="middle" font-size="21.05" font-weight="bold">Density of states</text>
</g>
<rect x="474.5" y="135.5" width="101" height="47.5" fill="#fff" stroke="#000" stroke-width="1.2"/>
<line x1="481" y1="149.3" x2="513" y2="149.3" stroke="#0000ff" stroke-width="2"/>
<line x1="481" y1="170.3" x2="513" y2="170.3" stroke="#ff0000" stroke-width="2"/>
<g font-family="Liberation Mono, monospace" font-size="12.3" fill="#000" letter-spacing="-1.38">
<text x="519.5" y="150">SpinUp</text>
<text x="519.5" y="171">SpinDown</text>
</g>
</svg>

 <div id="scroll"></div>
 <!-- ValueControl -->
 <div class="gb" style="left:618px;top:93px;width:378px;height:271px"></div>
 <div class="gbt t" style="left:627px;top:87px">ValueControl</div>
 <div class="t" style="left:629px;top:115px">Xmin</div>
 <div class="t" style="left:629px;top:141px">Xmax</div>
 <div class="t" style="left:629px;top:167px">Ymin</div>
 <div class="t" style="left:629px;top:193px">Ymax</div>
 <div class="spin" style="left:750px;top:111px;width:234px"><span class="v"><b>&#8722;</b><b>6</b></span><span class="sb"><i></i><i></i></span></div>
 <div class="spin" style="left:750px;top:137px;width:234px"><span class="v"><b>6</b></span><span class="sb"><i></i><i></i></span></div>
 <div class="spin" style="left:750px;top:163px;width:234px"><span class="v"><b>0</b></span><span class="sb"><i></i><i></i></span></div>
 <div class="spin" style="left:750px;top:189px;width:234px"><span class="v"><b>2</b><b style="text-align:left">.</b><b>2</b><b>7</b><b>0</b><b>2</b><b>6</b><b>8</b><b>2</b></span><span class="sb"><i></i><i></i></span></div>
 <div class="btn" style="left:750px;top:216px;width:234px;height:21px"><span class="t" style="position:static;line-height:21px">Apply</span></div>
 <div class="t" style="left:629px;top:248px">Spin Type</div>
 <div class="combo" style="left:750px;top:244px;width:234px"><span class="t" style="left:4px;top:3px">Both</span><span class="arr"></span></div>
 <div class="cb" style="left:630px;top:274px"></div>
 <div class="t" style="left:648px;top:274px">export size</div>
 <div class="spin dis" style="left:750px;top:270px;width:114px"><span class="v"><b>6</b><b>0</b><b>0</b></span><span class="sb"><i></i><i></i></span></div>
 <div class="spin dis" style="left:870px;top:270px;width:114px"><span class="v"><b>4</b><b>0</b><b>0</b></span><span class="sb"><i></i><i></i></span></div>
 <!-- WordControl -->
 <div class="gb" style="left:618px;top:377px;width:378px;height:270px"></div>
 <div class="gbt t" style="left:627px;top:371px">WordControl</div>
 <div class="t" style="left:629px;top:399px">TitleLabel</div>
 <div class="ecombo" style="left:696px;top:395px;width:213px"><span class="t" style="left:4px;top:3px">Arial</span><span class="arr"></span></div>
 <div class="combo" style="left:915px;top:395px;width:69px"><span class="t" style="left:4px;top:3px">16</span><span class="arr"></span></div>
 <div class="le" style="left:696px;top:421px;width:213px"><span class="t" style="left:4px;top:3px">Density of states</span></div>
 <div class="cb" style="left:915px;top:424px"><svg class="abs" style="left:0;top:0" width="11" height="11" viewBox="0 0 11 11"><path d="M2.2 5.2l2 3.2L8.8 1.8" fill="none" stroke="#31479f" stroke-width="1.8"/></svg></div>
 <div class="t" style="left:932px;top:425px">Bold</div>
 <div class="t" style="left:629px;top:451px">xAxisLabel</div>
 <div class="ecombo" style="left:696px;top:447px;width:213px"><span class="t" style="left:4px;top:3px">Arial</span><span class="arr"></span></div>
 <div class="combo" style="left:915px;top:447px;width:69px"><span class="t" style="left:4px;top:3px">14</span><span class="arr"></span></div>
 <div class="le" style="left:696px;top:473px;width:213px"><span class="t" style="left:4px;top:3px">Energy(eV)</span></div>
 <div class="cb" style="left:915px;top:476px"></div>
 <div class="t" style="left:932px;top:477px">Bold</div>
 <div class="t" style="left:629px;top:503px">yAxisLabel</div>
 <div class="ecombo" style="left:696px;top:499px;width:213px"><span class="t" style="left:4px;top:3px">Arial</span><span class="arr"></span></div>
 <div class="combo" style="left:915px;top:499px;width:69px"><span class="t" style="left:4px;top:3px">14</span><span class="arr"></span></div>
 <div class="le" style="left:696px;top:525px;width:213px"><span class="t" style="left:4px;top:3px">number of states/eV</span></div>
 <div class="cb" style="left:915px;top:528px"></div>
 <div class="t" style="left:932px;top:529px">Bold</div>
 <!-- scrollbar -->
 <div id="hsb"><div id="thumb"></div>
  <svg class="abs" style="left:0;top:0" width="389" height="16" viewBox="0 0 389 16"><path d="M9.5 4.5v7l-4-3.5zM379.5 4.5v7l4-3.5z" fill="#333"/><path d="M187.5 5v6M189.5 5v6M191.5 5v6" stroke="#555" stroke-width="1"/></svg>
 </div>
 <div class="abs" style="left:837.5px;top:679px;font-family:'Liberation Mono',monospace;font-size:14px;line-height:16px;letter-spacing:.53px;-webkit-text-stroke:.35px #111;color:#111;transform-origin:0 50%;white-space:nowrap" id="wm">ybx8.cn</div>
 <svg class="abs" style="left:995px;top:697px" width="12" height="12" viewBox="0 0 12 12"><g fill="#b8b8b8"><rect x="8" y="2" width="2" height="2"/><rect x="5" y="5" width="2" height="2"/><rect x="8" y="5" width="2" height="2"/><rect x="2" y="8" width="2" height="2"/><rect x="5" y="8" width="2" height="2"/><rect x="8" y="8" width="2" height="2"/></g></svg>
</div>
</body></html>
